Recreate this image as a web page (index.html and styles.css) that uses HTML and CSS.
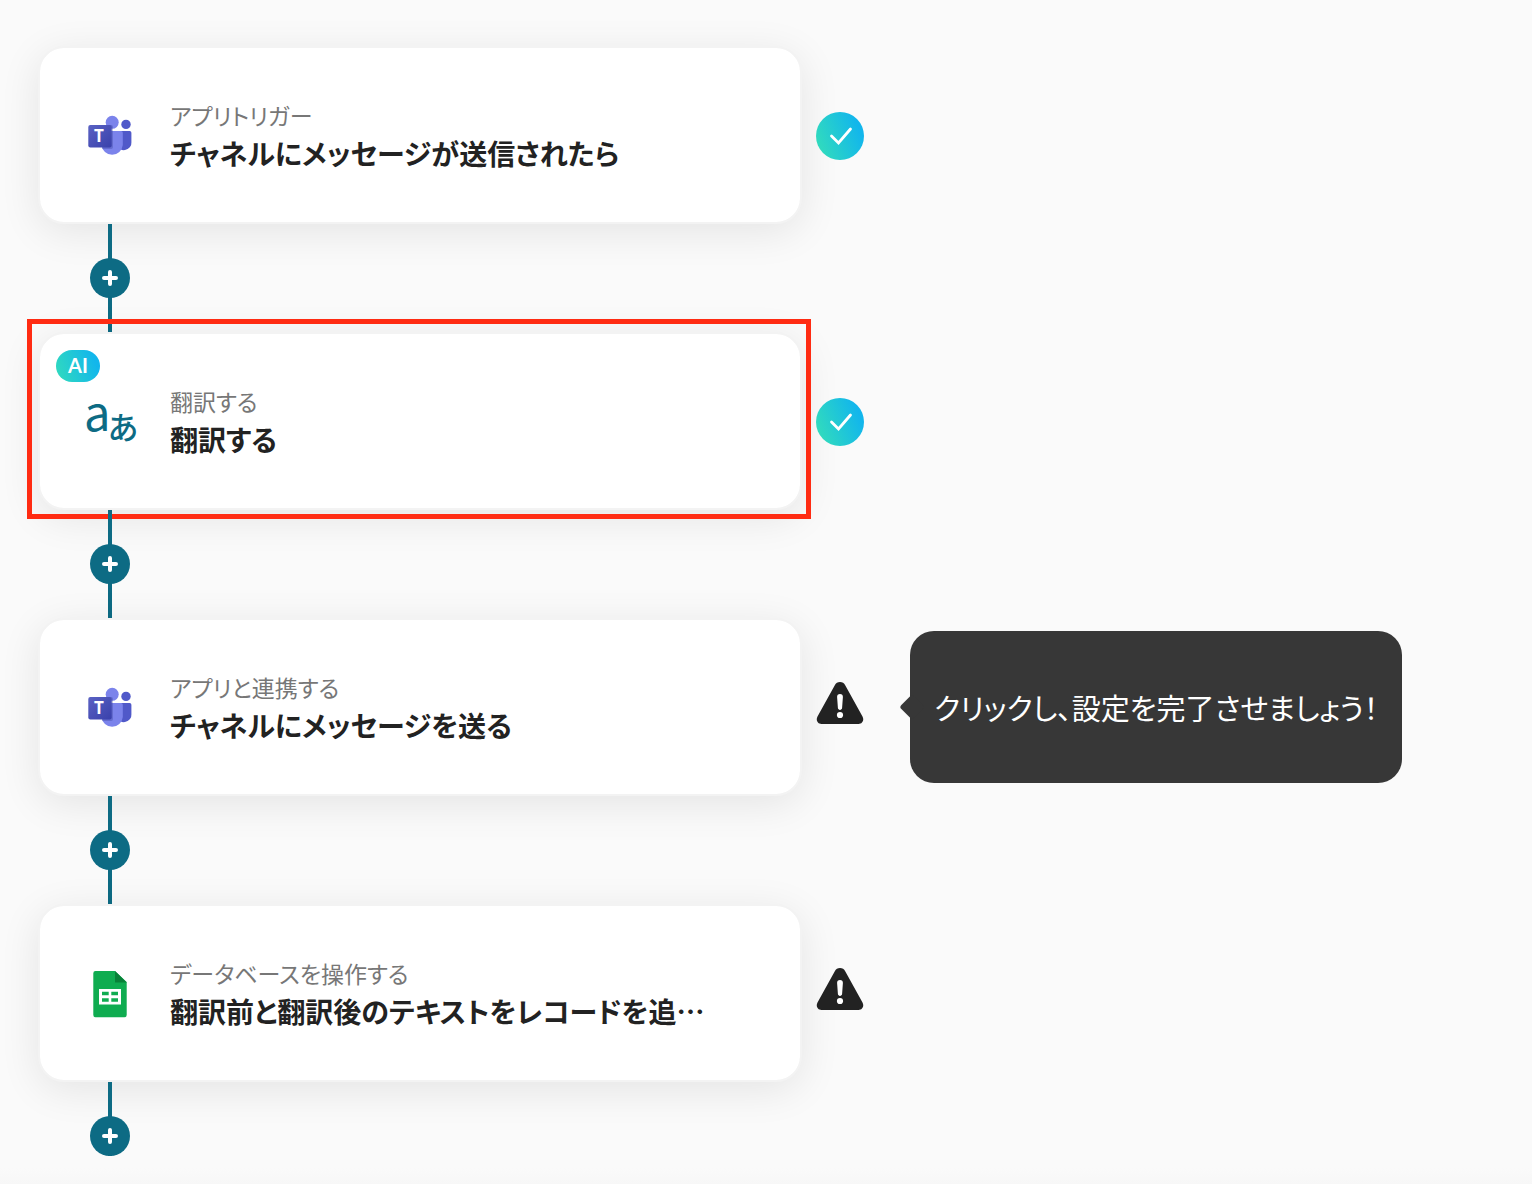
FILE: index.html
```html
<!DOCTYPE html>
<html lang="ja">

<head>
  <meta charset="UTF-8" />
  <meta name="viewport" content="width=device-width, initial-scale=1.0" />
  <title>翻訳する</title>
  <link rel="stylesheet" href="styles.css">
</head>

<body>

  <!-- Shared icons -->
  <svg class="sprite" aria-hidden="true">
    <defs>
      <linearGradient id="teams-tile" x1="0" y1="0" x2="1" y2="1">
        <stop offset="0" stop-color="#5a62c3" />
        <stop offset="1" stop-color="#3940ab" />
      </linearGradient>
      <linearGradient id="done-fill" x1="0" y1="0.7" x2="1" y2="0.3">
        <stop offset="0" stop-color="#32dcbc" />
        <stop offset="0.9" stop-color="#12b6ec" />
      </linearGradient>
    </defs>
    <symbol id="icon-teams" viewBox="0 0 48 48">
      <circle cx="40" cy="12.400" r="4.700" fill="#5059c9" />
      <path d="M34 19h9.700a1.700 1.700 0 0 1 1.700 1.700v9.800a7.500 7.500 0 0 1-11.400 6.500z" fill="#5059c9" />
      <circle cx="26.200" cy="10.300" r="6.500" fill="#7b83eb" />
      <path d="M15.500 19h19.500a1.800 1.800 0 0 1 1.800 1.800V33a10.700 10.700 0 0 1-21.300 0z" fill="#7b83eb" />
      <path d="M19 13h6a2 2 0 0 1 2 2v20a2 2 0 0 1-2 2H16V19h3z" fill="#30378f" opacity="0.3" />
      <rect x="2.300" y="13" width="23.400" height="22.500" rx="2" fill="url(#teams-tile)" />
    </symbol>
    <symbol id="icon-sheets" viewBox="0 0 48 48">
      <path d="M9.500 1H29l11.700 11v33a2.200 2.200 0 0 1-2.200 2.200h-29A2.200 2.200 0 0 1 7.300 45V3.200A2.200 2.200 0 0 1 9.500 1z" fill="#0fac50" />
      <path d="M29 1l11.700 11.500H29z" fill="#088138" />
      <path d="M13 19h22v15.500H13zM16 21.800v3.500h6.700v-3.500zM25.300 21.800v3.500H32v-3.500zM16 28.200v3.500h6.700v-3.500zM25.300 28.200v3.500H32v-3.500z" fill="#fff" fill-rule="evenodd" />
    </symbol>
    <symbol id="icon-done" viewBox="0 0 48 48">
      <circle cx="24" cy="24" r="24" fill="url(#done-fill)" />
      <path d="M15.500 24l7 7L34.500 17" fill="none" stroke="#fff" stroke-width="2.800" stroke-linecap="round" stroke-linejoin="miter" />
    </symbol>
    <symbol id="icon-warning" viewBox="0 0 48 48">
      <path d="M18.800 6.200a5.900 5.900 0 0 1 10.400 0L46.500 37.500c1.900 3.500 0 7.500-4 7.500h-37c-4 0-5.900-4-4-7.500z" fill="#222" />
      <path d="M24 15c1.900 0 3 1 2.900 2.900l-.8 11.200c-.1 2.400-4.100 2.400-4.200 0l-.8-11.200C21 16 22.100 15 24 15z" fill="#fff" />
      <circle cx="24" cy="36" r="3.100" fill="#fff" />
    </symbol>
    <symbol id="icon-plus" viewBox="0 0 16 16">
      <path d="M8 2v12M2 8h12" fill="none" stroke="#fff" stroke-width="4" stroke-linecap="round" />
    </symbol>
  </svg>

  <main>
    <ol class="flow">
      <li class="step">
        <div class="step-row">
          <article class="card">
            <svg class="app-icon" viewBox="0 0 48 48" role="img" aria-label="Microsoft Teams">
              <use href="#icon-teams" />
              <text x="13" y="30" class="teams-letter">T</text>
            </svg>
            <div class="card-body">
              <p>アプリトリガー</p>
              <h2>チャネルにメッセージが送信されたら</h2>
            </div>
          </article>
          <svg class="status" role="img" aria-label="設定済み"><use href="#icon-done" /></svg>
        </div>
        <div class="connector">
          <button type="button" class="add-step" aria-label="ステップを追加"><svg><use href="#icon-plus" /></svg></button>
        </div>
      </li>

      <li class="step">
        <div class="step-row">
          <article class="card selected">
            <span class="badge">AI</span>
            <svg class="app-icon" viewBox="0 0 48 48" role="img" aria-label="翻訳">
              <text x="-2" y="33" class="letter-a">a</text>
              <text x="22" y="41" class="letter-hira">あ</text>
            </svg>
            <div class="card-body">
              <p>翻訳する</p>
              <h2>翻訳する</h2>
            </div>
          </article>
          <svg class="status" role="img" aria-label="設定済み"><use href="#icon-done" /></svg>
        </div>
        <div class="connector">
          <button type="button" class="add-step" aria-label="ステップを追加"><svg><use href="#icon-plus" /></svg></button>
        </div>
      </li>

      <li class="step">
        <div class="step-row">
          <article class="card">
            <svg class="app-icon" viewBox="0 0 48 48" role="img" aria-label="Microsoft Teams">
              <use href="#icon-teams" />
              <text x="13" y="30" class="teams-letter">T</text>
            </svg>
            <div class="card-body">
              <p>アプリと連携する</p>
              <h2>チャネルにメッセージを送る</h2>
            </div>
          </article>
          <svg class="status warning" role="img" aria-label="未設定"><use href="#icon-warning" /></svg>
          <div class="tooltip" role="tooltip">クリックし、設定を完了させましょう！</div>
        </div>
        <div class="connector">
          <button type="button" class="add-step" aria-label="ステップを追加"><svg><use href="#icon-plus" /></svg></button>
        </div>
      </li>

      <li class="step">
        <div class="step-row">
          <article class="card">
            <svg class="app-icon" role="img" aria-label="Google Sheets"><use href="#icon-sheets" /></svg>
            <div class="card-body">
              <p>データベースを操作する</p>
              <h2>翻訳前と翻訳後のテキストをレコードを追…</h2>
            </div>
          </article>
          <svg class="status warning" role="img" aria-label="未設定"><use href="#icon-warning" /></svg>
        </div>
        <div class="connector last">
          <button type="button" class="add-step" aria-label="ステップを追加"><svg><use href="#icon-plus" /></svg></button>
        </div>
      </li>
    </ol>
  </main>

</body>

</html>
```

FILE: styles.css
```css
* {
  box-sizing: border-box;
}

body {
  font-family: "Noto Sans CJK JP", sans-serif;
  font-feature-settings: "palt";
  margin: 0;
  background: #fafafa;
  color: #222;
}

.sprite {
  position: absolute;
  width: 0;
  height: 0;
}

main {
  padding: 46px 38px 28px;
  background: linear-gradient(to top, #f7f7f7, #fafafa 16px);
}

.flow {
  list-style: none;
  margin: 0;
  padding: 0;
}

.step-row {
  display: flex;
  align-items: center;
}

.card {
  position: relative;
  display: flex;
  align-items: center;
  gap: 36px;
  flex: 0 1 764px;
  min-width: 0;
  min-height: 178px;
  padding: 0 46px;
  background: #fff;
  background-clip: padding-box;
  border: 2px solid #f3f3f3;
  border-radius: 26px;
  box-shadow: 0 8px 40px rgba(0, 0, 0, 0.09);
}

/* Red frame round the step being set up */
.card.selected::after {
  content: "";
  position: absolute;
  inset: -15px -11px -11px -13px;
  border: 5px solid #ff2b12;
  pointer-events: none;
}

.app-icon {
  flex: none;
  width: 48px;
  height: 48px;
  margin-top: 2px;
  overflow: visible;
}

.teams-letter {
  fill: #fff;
  font-family: "Open Sans", sans-serif;
  font-size: 17px;
  font-weight: 700;
  text-anchor: middle;
}

.letter-a,
.letter-hira {
  fill: #0d6b84;
}

.letter-a {
  font-size: 47px;
  font-weight: 400;
}

.letter-hira {
  font-size: 31px;
  font-weight: 500;
}

.card-body {
  min-width: 0;
  padding-bottom: 2px;
}

.card-body p,
.card-body h2 {
  margin: 0;
  line-height: 38px;
}

.card-body p {
  font-size: 23px;
  color: #777;
}

.card-body h2 {
  font-size: 28px;
  font-weight: 700;
}

.badge {
  position: absolute;
  top: 16px;
  left: 16px;
  width: 44px;
  height: 32px;
  border-radius: 16px;
  background: linear-gradient(70deg, #32dcbc, #12b6ec 85%);
  color: #fff;
  font-family: Lato, sans-serif;
  font-size: 20px;
  font-weight: 700;
  line-height: 30px;
  text-align: center;
}

.status {
  position: relative;
  flex: none;
  width: 48px;
  height: 48px;
  margin-top: 2px;
  margin-left: 14px;
}

.status.warning {
  margin-top: 0;
  margin-bottom: 8px;
}

.tooltip {
  position: relative;
  margin-left: 46px;
  padding: 56px 24px;
  background: #373737;
  border-radius: 24px;
  color: #fff;
  font-size: 29px;
  line-height: 40px;
}

.tooltip::before {
  content: "";
  position: absolute;
  top: 50%;
  left: -7px;
  width: 18px;
  height: 18px;
  margin-top: -9px;
  background: #373737;
  border-radius: 3px;
  transform: rotate(45deg);
}

.connector {
  position: relative;
  display: flex;
  align-items: center;
  justify-content: center;
  width: 40px;
  height: 108px;
  margin-left: 52px;
  background: linear-gradient(#0d6b84, #0d6b84) center / 4px 100% no-repeat;
}

.connector.last {
  height: 74px;
  align-items: flex-end;
}

.add-step {
  display: flex;
  align-items: center;
  justify-content: center;
  width: 40px;
  height: 40px;
  padding: 0;
  border: none;
  border-radius: 50%;
  background: #0d6b84;
  cursor: pointer;
}

.add-step svg {
  width: 16px;
  height: 16px;
}

@media (max-width: 900px) {
  .step-row {
    flex-wrap: wrap;
  }
}
```
